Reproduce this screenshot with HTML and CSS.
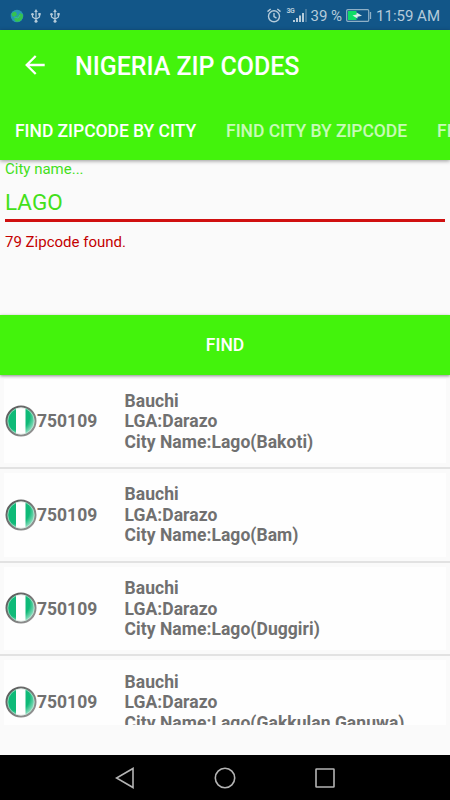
FILE: index.html
```html
<!DOCTYPE html>
<html lang="en">
<head>
  <meta charset="UTF-8">
  <meta name="viewport" content="width=device-width, initial-scale=1.0">
  <title>Nigeria Zip Codes</title>
  <link rel="stylesheet" href="styles.css">
</head>
<body>
  <!-- Shared symbols -->
  <svg class="defs" width="0" height="0">
    <defs>
      <linearGradient id="ring" x1="0" y1="0" x2="1" y2="1">
        <stop offset="0" stop-color="#555"/>
        <stop offset="0.5" stop-color="#777"/>
        <stop offset="1" stop-color="#999"/>
      </linearGradient>
      <radialGradient id="shine" cx="0.35" cy="0.35" r="0.7">
        <stop offset="0.65" stop-color="#fff" stop-opacity="0"/>
        <stop offset="1" stop-color="#fff" stop-opacity="0.6"/>
      </radialGradient>
      <clipPath id="disc"><circle cx="16" cy="16" r="14"/></clipPath>
    </defs>
    <symbol id="flag" viewBox="0 0 32 32">
      <g clip-path="url(#disc)">
        <rect width="32" height="32" fill="#0fba78"/>
        <rect x="11" width="9.5" height="32" fill="#fff"/>
        <circle cx="16" cy="16" r="14" fill="url(#shine)"/>
      </g>
      <circle cx="16" cy="16" r="14.5" fill="none" stroke="url(#ring)" stroke-width="2"/>
      <circle cx="16" cy="16" r="13.2" fill="none" stroke="#d5e5de" stroke-width="0.6"/>
    </symbol>
    <symbol id="usb" viewBox="0 0 10 14">
      <path d="M5 2v10M1.5 5.5V8L5 10.3L8.5 8V5.5" fill="none" stroke="currentColor" stroke-width="1.2"/>
      <path d="M5 0L6.8 3H3.2z" fill="currentColor"/>
      <circle cx="5" cy="12.3" r="1.5" fill="currentColor"/>
      <circle cx="1.5" cy="5.3" r="1.3" fill="currentColor"/>
      <rect x="7.3" y="4" width="2.4" height="2.4" fill="currentColor"/>
    </symbol>
  </svg>

  <div class="phone">
    <div class="status">
      <svg class="globe" width="14" height="14" viewBox="0 0 14 14">
        <circle cx="7" cy="7" r="6.3" fill="#2796b4"/>
        <path d="M1.5 4.5Q4 2 6 3L7 6L4 8L2 7zM4 10L8 7L10 4L13 5.5Q13.5 9 11 11.5Q8 13.5 5.5 12.5z" fill="#35c250"/>
        <path d="M4 8L8 9L10 6" fill="none" stroke="#32b7a4"/>
      </svg>
      <svg class="usb" width="10" height="14"><use href="#usb"/></svg>
      <svg class="usb second" width="10" height="14"><use href="#usb"/></svg>

      <svg class="alarm" width="14" height="15" viewBox="0 0 14 15">
        <g fill="none" stroke="currentColor" stroke-width="1.4">
          <circle cx="7" cy="8.3" r="5.5"/>
          <path d="M7 5v3.600l2.500 1.500M0.500 3.600L3.700 1M13.500 3.600L10.300 1"/>
        </g>
      </svg>
      <span class="network">3G</span>
      <svg class="signal" width="15" height="15" viewBox="0 0 15 15">
        <path d="M0 12h2v2H0zM3 10h2v4H3zM6 7.500h2V14H6zM9 5h2v9H9z" fill="currentColor"/>
        <path d="M12 1h2v13h-2z" fill="#46799f"/>
      </svg>
      <span class="percent">39 %</span>
      <svg class="battery" width="26" height="13" viewBox="0 0 26 13">
        <rect x="0.700" y="0.700" width="22" height="11.600" rx="1" fill="none" stroke="#8fb0c6" stroke-width="1.200"/>
        <rect x="2" y="2" width="8.500" height="9" fill="#0fdc65"/>
        <path d="M6.500 6.500L10.500 5.500V3.500L16 6.700L11.500 7.800V9.500z" fill="#d8ede8"/>
        <path d="M24.500 3v7" stroke="#8fb0c6" stroke-width="1.300"/>
      </svg>
      <span class="clock">11:59 AM</span>
    </div>

    <header class="header">
      <div class="toolbar">
        <svg class="back" width="20" height="20" viewBox="0 0 20 20">
          <path d="M19.700 10H1.700M10.700 1L1.700 10L10.700 19" fill="none" stroke="#fff" stroke-width="2.300"/>
        </svg>
        <h1>NIGERIA ZIP CODES</h1>
      </div>
      <nav class="tabs">
        <a class="tab active">FIND ZIPCODE BY CITY</a>
        <a class="tab">FIND CITY BY ZIPCODE</a>
        <a class="tab">FIND</a>
      </nav>
    </header>

    <main class="content">
      <div class="field">
        <label for="city">City name...</label>
        <input id="city" type="text" value="LAGO">
        <p class="message">79 Zipcode found.</p>
      </div>

      <button class="find">FIND</button>

      <div class="results">
        <div class="row">
          <div class="card">
            <svg class="flag" width="32" height="32"><use href="#flag"/></svg>
            <span class="zip">750109</span>
            <p class="place">Bauchi<br>LGA:Darazo<br>City Name:Lago(Bakoti)</p>
          </div>
        </div>
        <div class="row">
          <div class="card">
            <svg class="flag" width="32" height="32"><use href="#flag"/></svg>
            <span class="zip">750109</span>
            <p class="place">Bauchi<br>LGA:Darazo<br>City Name:Lago(Bam)</p>
          </div>
        </div>
        <div class="row">
          <div class="card">
            <svg class="flag" width="32" height="32"><use href="#flag"/></svg>
            <span class="zip">750109</span>
            <p class="place">Bauchi<br>LGA:Darazo<br>City Name:Lago(Duggiri)</p>
          </div>
        </div>
        <div class="row">
          <div class="card">
            <svg class="flag" width="32" height="32"><use href="#flag"/></svg>
            <span class="zip">750109</span>
            <p class="place">Bauchi<br>LGA:Darazo<br>City Name:Lago(Gakkulan Ganuwa)</p>
          </div>
        </div>
      </div>
    </main>

    <footer class="navbar">
      <svg width="20" height="22" viewBox="0 0 20 22"><path d="M18 1.500v19L1.500 11z"/></svg>
      <svg width="22" height="22" viewBox="0 0 22 22"><circle cx="11" cy="11" r="9.700"/></svg>
      <svg width="20" height="20" viewBox="0 0 20 20"><rect x="1" y="1" width="18" height="18" rx="0.500"/></svg>
    </footer>
  </div>
</body>
</html>
```
FILE: styles.css
```css
* {
  margin: 0;
  padding: 0;
  box-sizing: border-box;
}

body {
  font-family: Roboto, sans-serif;
  background: #fafafa;
}

.defs {
  display: block;
}

.phone {
  width: 450px;
  height: 800px;
  display: flex;
  flex-direction: column;
  overflow: hidden;
}

/* Status bar */
.status {
  flex: none;
  height: 30px;
  display: flex;
  align-items: center;
  padding: 1px 10px 0;
  background: #125688;
  color: #b5cbda;
  font-size: 15px;
  white-space: nowrap;
}

.usb {
  margin-left: 7px;
}

.usb.second {
  margin-left: 9px;
}

.alarm {
  margin-left: auto;
}

.network {
  align-self: flex-start;
  width: 8px;
  margin: 6px 0 0 5px;
  font-size: 7px;
  line-height: 9px;
  font-weight: bold;
  letter-spacing: -0.5px;
}

.signal {
  margin-left: -1px;
}

.percent {
  margin-left: 2px;
}

.battery {
  margin-left: 4px;
}

.clock {
  margin-left: 4px;
}

/* Header */
.header {
  flex: none;
  height: 130px;
  background: #43f30c;
  color: #fff;
  position: relative;
  box-shadow: 0 1px 4px rgba(0, 0, 0, 0.4);
}

.toolbar {
  height: 70px;
  display: flex;
  align-items: center;
  padding-left: 25px;
}

h1 {
  margin-left: 30px;
  padding-top: 2px;
  font-size: 25px;
  font-weight: 500;
  letter-spacing: -0.05px;
}

.tabs {
  height: 60px;
  display: flex;
  align-items: center;
  padding: 2px 0 0 15px;
  gap: 30px;
  overflow: hidden;
}

.tab {
  flex: none;
  font-size: 17.5px;
  font-weight: 500;
  letter-spacing: -0.04px;
  opacity: 0.7;
}

.tab.active {
  opacity: 1;
}

/* Search form */
.content {
  flex: 1;
  min-height: 0;
  display: flex;
  flex-direction: column;
}

.field {
  height: 155px;
  padding: 0 5px;
  color: #43e01a;
}

.field label {
  display: block;
  font-size: 15px;
  line-height: 18px;
}

.field input {
  display: block;
  width: 100%;
  height: 44px;
  padding: 6px 0 0;
  border: none;
  border-bottom: 3px solid #d01010;
  outline: none;
  background: none;
  color: inherit;
  font: 22.5px Roboto, sans-serif;
}

.message {
  margin-top: 11px;
  color: #c40000;
  font-size: 15px;
  line-height: 18px;
}

.find {
  flex: none;
  height: 60px;
  border: none;
  background: #43f30c;
  color: #fff;
  font: 500 17.5px Roboto, sans-serif;
  position: relative;
  box-shadow: 0 1px 3px rgba(0, 0, 0, 0.45);
}

/* Results list */
.results {
  height: 350px;
  overflow: hidden;
}

.row {
  height: 93.75px;
  padding: 4px;
  border-bottom: 2px solid #e2e2e2;
}

.card {
  height: 100%;
  display: flex;
  align-items: center;
  background: #fefefe;
  color: #707070;
  font-size: 17.5px;
  font-weight: bold;
  line-height: 20.5px;
}

.flag {
  flex: none;
  margin-left: 1px;
}

.zip {
  width: 87.5px;
  padding-top: 1px;
}

.place {
  padding-top: 1px;
  letter-spacing: 0.05px;
  white-space: nowrap;
}

/* Navigation bar */
.navbar {
  flex: none;
  height: 45px;
  display: flex;
  align-items: center;
  justify-content: center;
  gap: 79px;
  background: #000;
}

.navbar svg {
  fill: none;
  stroke: #b4b4b4;
  stroke-width: 1.6;
}
```
